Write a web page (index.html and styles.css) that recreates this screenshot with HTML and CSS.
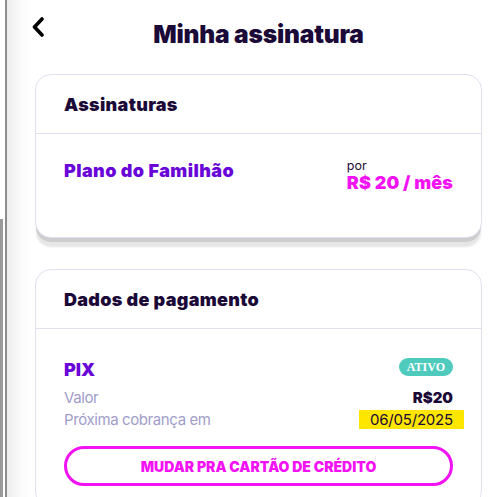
FILE: index.html
```html
<!DOCTYPE html>
<html lang="pt-BR">
<head>
<meta charset="utf-8">
<title>Minha assinatura</title>
<link rel="stylesheet" href="styles.css">
</head>
<body>
<div class="page">
  <header class="topbar">
    <button class="back" aria-label="Voltar">
      <svg width="14" height="20" viewBox="0 0 14 20"><polyline points="11,2 3.5,10 11,18" fill="none" stroke="#000" stroke-width="3.6" stroke-linecap="round" stroke-linejoin="round"/></svg>
    </button>
    <h1 class="title">Minha assinatura</h1>
    <span></span>
  </header>

  <section class="card card-stacked">
    <div class="card-head">Assinaturas</div>
    <div class="card-body plan">
      <div class="plan-name">Plano do Familhão</div>
      <div class="price">
        <span class="price-por">por</span>
        <span class="price-val">R$ 20 / mês</span>
      </div>
    </div>
  </section>

  <section class="card">
    <div class="card-head">Dados de pagamento</div>
    <div class="card-body pay">
      <div class="row method-row">
        <span class="method">PIX</span>
        <span class="badge">ATIVO</span>
      </div>
      <div class="row info">
        <span class="label">Valor</span>
        <span class="amount">R$20</span>
      </div>
      <div class="row info">
        <span class="label">Próxima cobrança em</span>
        <span class="date">06/05/2025</span>
      </div>
      <button class="switch">MUDAR PRA CARTÃO DE CRÉDITO</button>
    </div>
  </section>
</div>
</body>
</html>
```
FILE: styles.css
```css
* { box-sizing: border-box; }
html, body { height: 100%; }
body {
  margin: 0;
  font-family: Inter, "Noto Sans", sans-serif;
  color: #1b0938;
  background:
    linear-gradient(#9a9a9a, #9a9a9a) no-repeat 0 219px / 3px 100%,
    linear-gradient(to right, #fff 0 5px, #8c8c8c 5px 7px, #ededed 7px, #fafafa 20px, #fff 34px);
  overflow: hidden;
}
.page {
  padding: 0 14px 0 35px;
}
.topbar {
  display: grid;
  grid-template-columns: 1fr auto 1fr;
  align-items: center;
  height: 74px;
  padding-bottom: 6px;
}
.back {
  justify-self: start;
  margin-left: -4px;
  margin-top: -14px;
  padding: 0;
  border: 0;
  background: none;
  display: flex;
}
.title {
  margin: 0;
  font-size: 24.5px;
  font-weight: 900;
  letter-spacing: -0.2px;
  color: #1b0938;
}
.card {
  border: 1.5px solid #e2dff0;
  border-radius: 16px;
  background: #fff;
  margin-bottom: 31px;
}
.card-stacked {
  box-shadow: 0 5px 0 -1px #cdcdcd, 0 10px 2px -1px #e6e6e6;
}
.card-head {
  height: 59px;
  display: flex;
  align-items: center;
  padding: 0 28px;
  font-size: 18px;
  font-weight: 900;
  letter-spacing: 0.3px;
  border-bottom: 1.5px solid #e2dff0;
}
.card-body {
  padding: 0 28px;
}
.plan {
  display: flex;
  justify-content: space-between;
  align-items: flex-start;
  height: 103px;
  padding-top: 26px;
}
.plan-name {
  font-size: 18px;
  font-weight: 900;
  letter-spacing: 0.4px;
  color: #6a05d8;
}
.price {
  display: flex;
  flex-direction: column;
  margin-top: -1px;
}
.price-por {
  font-size: 12.5px;
  line-height: 14px;
  color: #1b0938;
}
.price-val {
  font-size: 18px;
  line-height: 20px;
  font-weight: 900;
  letter-spacing: 0.1px;
  color: #f312f3;
}
.pay {
  padding-top: 28px;
  padding-bottom: 20px;
}
.row {
  display: flex;
  justify-content: space-between;
  align-items: center;
}
.method-row {
  height: 24px;
  margin-bottom: 5px;
}
.method {
  font-size: 18px;
  font-weight: 900;
  color: #6a05d8;
}
.badge {
  background: #4ecbbd;
  color: #fff;
  font-family: "Liberation Serif", serif;
  font-weight: 700;
  font-size: 12px;
  line-height: 12px;
  border-radius: 9px;
  padding: 3px 8px 3px;
  margin-top: -5px;
}
.info {
  height: 22px;
  font-size: 15px;
}
.label {
  color: #a19dc9;
  letter-spacing: -0.4px;
}
.amount {
  font-weight: 900;
  font-size: 15px;
}
.date {
  background: #ffe600;
  padding: 0 11px;
  margin-right: -11px;
  letter-spacing: -0.2px;
}
.switch {
  display: block;
  width: 100%;
  height: 40px;
  margin-top: 16px;
  border: 3px solid #f312f3;
  border-radius: 20px;
  background: #fff;
  color: #f312f3;
  font-family: Inter, "Noto Sans", sans-serif;
  font-weight: 900;
  font-size: 14px;
  letter-spacing: 0;
}
```
